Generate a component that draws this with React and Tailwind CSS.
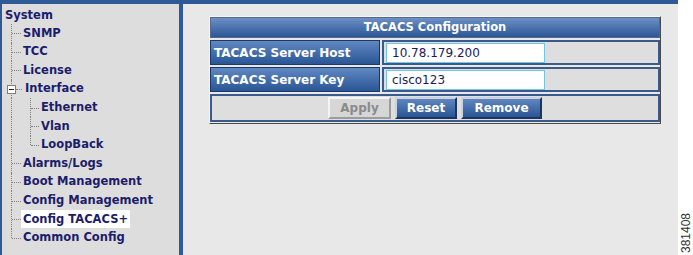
import React from "react";

const NAVY = "text-[#1c1c6c]";

function TreeRow({ label, level = 0, last = false, subLast = false, highlight = false, expander = false }) {
  return (
    <div className="flex h-[18.6px] items-center">
      <div className={`relative h-full shrink-0 ${level === 1 ? "w-[37px]" : "w-[19px]"}`}>
        <div
          className={`absolute left-[9px] top-0 border-l border-dotted border-[#808080] ${last ? "h-1/2" : "h-full"}`}
        />
        {level === 0 && !expander && (
          <div className="absolute left-[10px] top-1/2 w-[9px] border-t border-dotted border-[#808080]" />
        )}
        {expander && (
          <>
            <div className="absolute left-[14px] top-1/2 w-[6px] border-t border-dotted border-[#808080]" />
            <div className="absolute left-[5px] top-[5px] flex h-[9px] w-[9px] items-center justify-center border border-[#7f7f7f] bg-white">
              <div className="h-px w-[5px] bg-[#222]" />
            </div>
          </>
        )}
        {level === 1 && (
          <>
            <div
              className={`absolute left-[28px] top-0 border-l border-dotted border-[#808080] ${subLast ? "h-1/2" : "h-full"}`}
            />
            <div className="absolute left-[29px] top-1/2 w-[8px] border-t border-dotted border-[#808080]" />
          </>
        )}
      </div>
      <span
        className={`inline-flex h-[18px] items-center px-[2px] text-[11.5px] font-bold ${NAVY} ${
          highlight ? "bg-white" : ""
        } ${expander ? "ml-[2px]" : ""}`}
      >
        {label}
      </span>
    </div>
  );
}

function Sidebar() {
  return (
    <div className="h-full w-[179px] shrink-0 border-l-2 border-[#2f5a96] bg-[#dddddd] pt-[3px]">
      <div className={`flex h-[17px] items-center pl-[3px] text-[11.5px] font-bold ${NAVY}`}>System</div>
      <TreeRow label="SNMP" />
      <TreeRow label="TCC" />
      <TreeRow label="License" />
      <TreeRow label="Interface" expander />
      <TreeRow label="Ethernet" level={1} />
      <TreeRow label="Vlan" level={1} />
      <TreeRow label="LoopBack" level={1} subLast />
      <TreeRow label="Alarms/Logs" />
      <TreeRow label="Boot Management" />
      <TreeRow label="Config Management" />
      <TreeRow label="Config TACACS+" highlight />
      <TreeRow label="Common Config" last />
    </div>
  );
}

function FieldRow({ label, value }) {
  return (
    <div className="flex h-[25px] gap-[2px]">
      <div className="flex w-[170px] shrink-0 items-center border border-[#1d3765] bg-linear-to-b from-[#6088c2] to-[#2a5695] pl-[3px] text-[12px] font-bold text-white">
        {label}
      </div>
      <div className="flex flex-1 items-center border-2 border-[#3a5a8c] bg-[#dedede] pl-[2px]">
        <div className="flex h-[20px] w-[159px] items-center border border-[#72c6e6] bg-white pl-[5px] text-[12px] text-[#1a1a5a]">
          {value}
        </div>
      </div>
    </div>
  );
}

function Content() {
  return (
    <div className="h-full flex-1 bg-[#e8e8e8] pl-[26px] pt-[12px]">
      <div className="flex w-[452px] flex-col gap-[2px] border border-t-[#f6f6f6] border-l-[#f6f6f6] border-b-[#4a4a4a] border-r-[#4a4a4a] pb-px">
        <div className="flex h-[21px] items-center justify-center border border-[#566a88] bg-linear-to-b from-[#6c90c6] to-[#2b5696] text-[11.5px] font-bold text-white">
          TACACS Configuration
        </div>
        <FieldRow label="TACACS Server Host" value="10.78.179.200" />
        <FieldRow label="TACACS Server Key" value="cisco123" />
        <div className="flex h-[28px] items-center justify-center gap-[4px] border-2 border-[#3a5a8c] bg-[#dedede]">
          <div className="flex h-[22px] w-[63px] items-center justify-center border-2 border-t-[#f4f4f4] border-l-[#f4f4f4] border-b-[#9c9c9c] border-r-[#9c9c9c] bg-[#d6d6d6] text-[12px] font-bold text-[#8a8a8a]">
            Apply
          </div>
          <div className="flex h-[22px] w-[62px] items-center justify-center border-2 border-t-[#c9d3e3] border-l-[#c9d3e3] border-b-[#1c355f] border-r-[#1c355f] bg-linear-to-b from-[#5f86c0] to-[#2a5594] text-[12px] font-bold text-white">
            Reset
          </div>
          <div className="flex h-[22px] w-[81px] items-center justify-center border-2 border-t-[#c9d3e3] border-l-[#c9d3e3] border-b-[#1c355f] border-r-[#1c355f] bg-linear-to-b from-[#5f86c0] to-[#2a5594] text-[12px] font-bold text-white">
            Remove
          </div>
        </div>
      </div>
    </div>
  );
}

export default function App() {
  return (
    <div className="flex h-[255px] w-[693px] overflow-hidden bg-white font-['DejaVu_Sans',sans-serif]">
      <div className="flex h-full w-[678px] shrink-0 flex-col">
        <div className="h-[4px] shrink-0 bg-[#2f5a96]" />
        <div className="flex min-h-0 flex-1">
          <Sidebar />
          <div className="h-full w-[4px] shrink-0 bg-[#2f5a96]" />
          <Content />
        </div>
      </div>
      <div className="flex flex-1 flex-col items-center justify-end pb-[2px]">
        <div className="rotate-180 font-['Liberation_Sans',sans-serif] text-[12px] leading-none text-[#333] [writing-mode:vertical-rl]">
          381408
        </div>
      </div>
    </div>
  );
}
